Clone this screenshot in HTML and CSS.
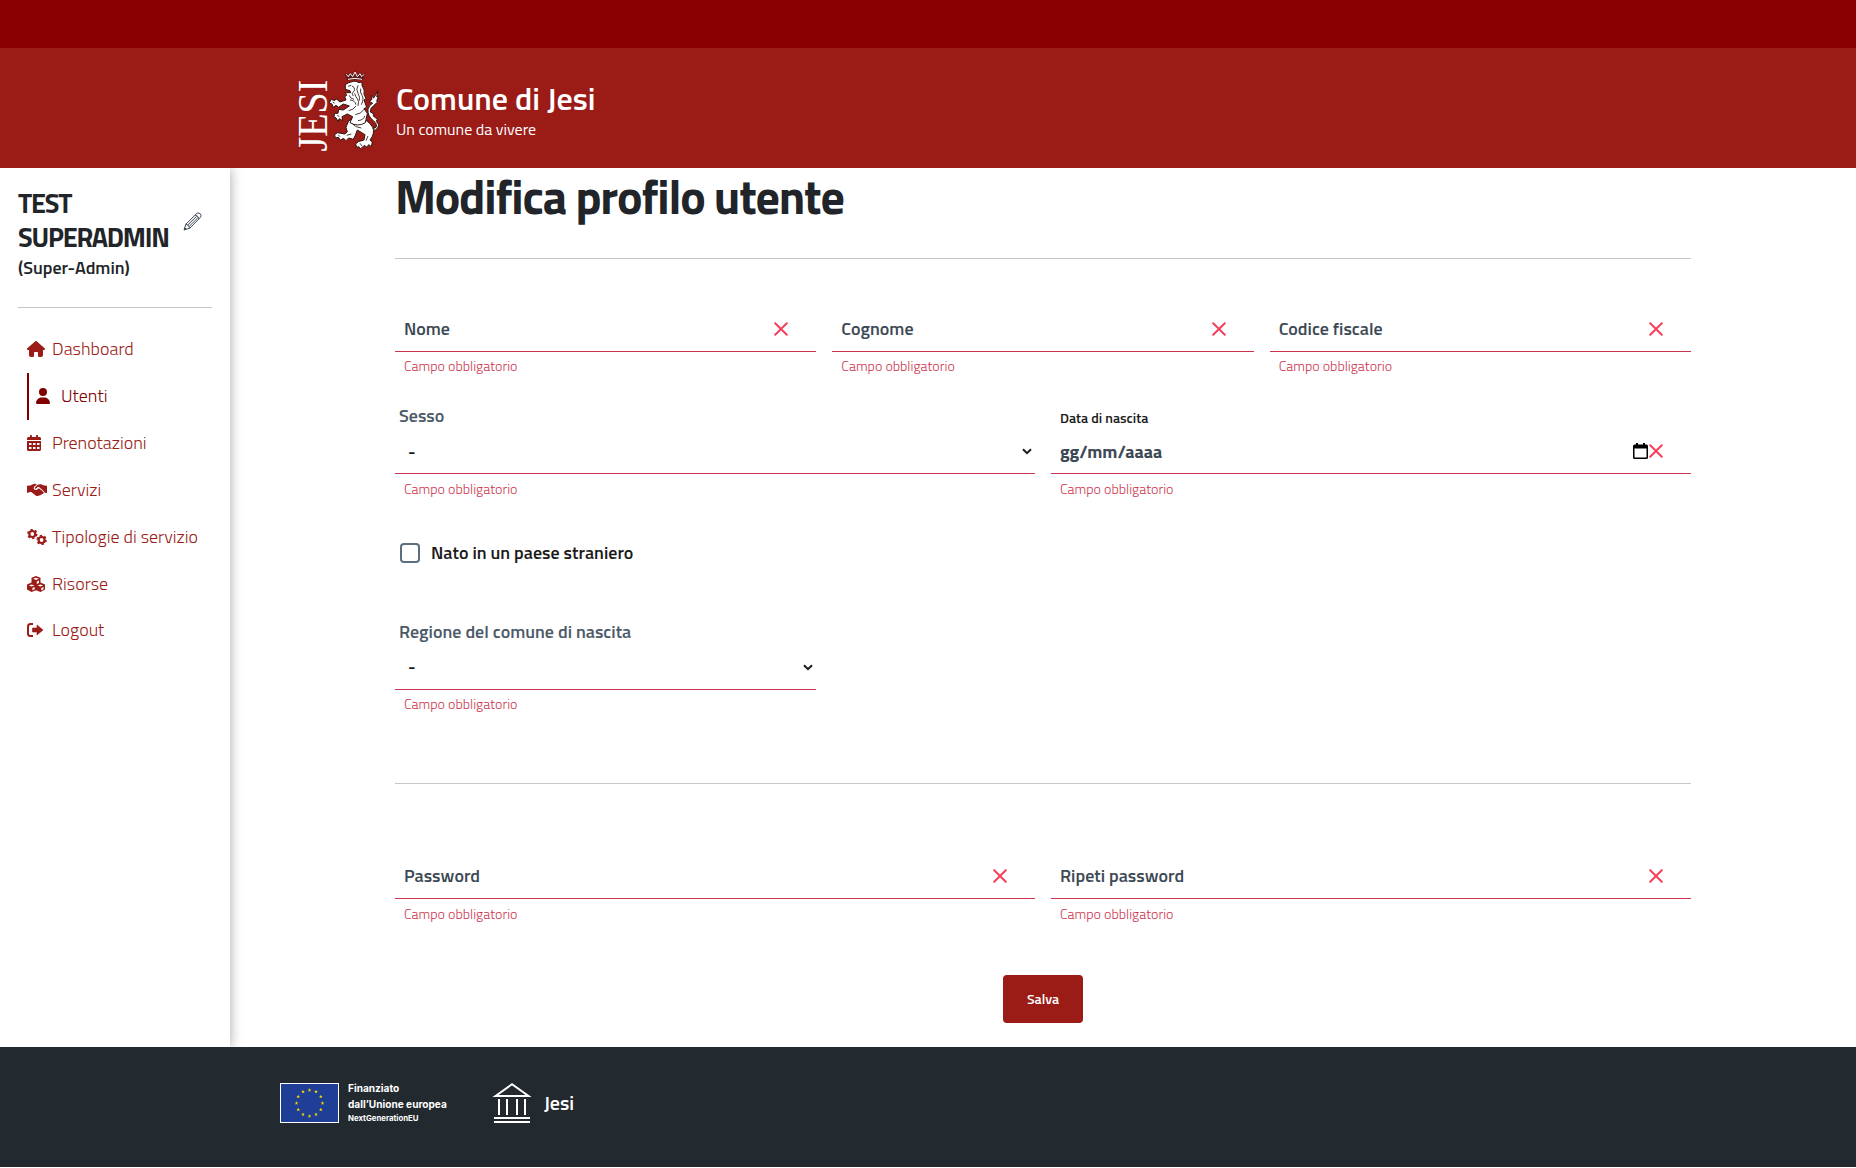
FILE: index.html
```html
<!DOCTYPE html>
<html lang="it">
<head>
<meta charset="utf-8">
<title>Modifica profilo utente</title>
<link rel="stylesheet" href="styles.css">
</head>
<body>
<svg class="defs" width="0" height="0" aria-hidden="true">
  <symbol id="cross" viewBox="0 0 14 14"><path d="M1.2 1.2 12.8 12.8M12.8 1.2 1.2 12.8" fill="none" stroke="#f73e5a" stroke-width="2" stroke-linecap="round"/></symbol>
  <symbol id="chevron" viewBox="0 0 10 7"><path d="M1 1.2 5 5.2 9 1.2" fill="none" stroke="#1a1a1a" stroke-width="2"/></symbol>
</svg>
<div class="slim"></div>
<header class="header">
  <svg class="crest" viewBox="0 0 84 82">
    <text class="crest-name" transform="translate(29.500 82.500) rotate(-90)" textLength="72" lengthAdjust="spacingAndGlyphs">JESI</text>
    <g transform="translate(-7 -5) scale(.3333)" stroke-linejoin="round">
      <path d="M173 47 167 30 175 35 180 26 187 35 195 22 202 35 211 26 215 35 223 30 217 47Q195 42 173 47Z" fill="#5b1a18" stroke="#2b1515" stroke-width="2"/>
      <path d="M174 46Q195 40 216 46M169 31l6 7 6-9 7 9 7-14 7 14 8-9 5 9 7-7" fill="none" stroke="#fff" stroke-width="3"/>
      <g fill="#fff" stroke="#2b1515" stroke-width="3">
        <path d="M222 182Q246 200 258 190 264 182 250 170 232 156 234 136 238 122 248 118L238 112 246 106 242 94 251 102 264 80 260 98 265 97 260 112 263 114 252 124Q240 132 241 144L252 150 249 155 262 166 259 172 266 182Q264 198 250 199 236 202 222 194Z"/>
        <path d="M206 160Q236 168 248 190 256 208 240 228L247 234 244 248 236 242 230 250 224 244 212 254 206 248 200 250 197 240 205 233 222 228 225 212 202 198 196 214 190 226 176 222 168 230 161 223 150 229 146 220 136 222 134 212 142 206 164 210 172 204 168 190 176 170Z"/>
        <path d="M166 62 176 56 190 52Q200 50 206 56L216 54 216 64Q226 80 222 90L228 104 222 108 230 130 222 134 232 148 226 176Q204 190 180 176L188 158 172 150 156 158 158 170 148 164 144 172 138 162 132 158 134 148 144 148 146 136 160 138 178 126 160 120 146 130 138 124 130 130 126 120 118 116 124 106 134 110 138 104 150 114 168 108 164 98 170 94 166 86 182 86 180 80 166 76Z"/>
      </g>
      <path d="M174 67l10-3M186 66q8 3 8 10t-8 12l4 8M204 64q-7 12 0 24t4 22M212 74q-3 10 4 20t-2 28M194 88q2 10 8 16t2 22M178 94q2 10 14 12M180 108q14 0 18 14M176 140q14-2 22-14M196 152q18-2 26-16M204 170q18-2 20-14M188 180q8 10 26 12M170 214l14-4M228 230l6-14M144 212l6 6M210 238l6 8M128 114l6 4M142 154l6 4" fill="none" stroke="#2b1515" stroke-width="2.500"/>
    </g>
  </svg>
  <div>
    <div class="brand">Comune di Jesi</div>
    <div class="tagline">Un comune da vivere</div>
  </div>
</header>
<div class="body">
  <aside class="side">
    <div class="user">
      <div class="user-name">TEST<br>SUPERADMIN</div>
      <svg class="pencil" viewBox="0 0 24 24" fill="none" stroke="#3b4656" stroke-width="1.250" stroke-linejoin="round"><path d="M1.500 22.500 3.500 15.500 16.500 2.700Q18 1 20 1.300 22.500 2 22.800 4.500 22.800 6 21.300 7.500L8.500 20.500Z M3.500 15.500Q7.500 16 8.500 20.500M15.300 4Q19.500 4.500 20 8.700M6 16.500 17 5.500M7.700 18.200 18.700 7.300M1.500 22.500 4 21.700 2.300 20Z"/></svg>
    </div>
    <div class="role">(Super-Admin)</div>
    <nav class="menu">
      <a class="item"><svg class="icon w18" viewBox="0 0 576 512"><path d="M575.800 255.500c0 18-15 32.100-32 32.100h-32l.7 160.200c.2 35.300-28.300 64.200-64.200 64.200H392c-22.100 0-40-17.900-40-40v-88c0-17.700-14.300-32-32-32h-64c-17.700 0-32 14.300-32 32v88c0 22.100-17.900 40-40 40h-56c-35.300 0-64-28.700-64-64V287.600H32c-18 0-32-14-32-32.100 0-9 3-17 10-24L266.400 8c7-7 15-8 22-8s15 2 21 7l255.400 224.500c8 7 12 15 11 24z"/></svg><span>Dashboard</span></a>
      <a class="item active"><svg class="icon w14" viewBox="0 0 448 512"><path d="M224 256a128 128 0 1 0 0-256 128 128 0 1 0 0 256zM178 304C80 304 0 384 0 482c0 16 13 30 30 30h388c17 0 30-14 30-30 0-98-80-178-178-178z"/></svg><span>Utenti</span></a>
      <a class="item"><svg class="icon w14" viewBox="0 0 448 512"><path fill-rule="evenodd" d="M128 0c18 0 32 14 32 32v32h128V32c0-18 14-32 32-32s32 14 32 32v32h48c27 0 48 22 48 48v48H0v-48c0-26 22-48 48-48h48V32c0-18 14-32 32-32zM0 192h448v272c0 27-21 48-48 48H48c-26 0-48-21-48-48zm64 64v64h80v-64zm128 0v64h80v-64zm128 0v64h80v-64zM64 384v64h80v-64zm128 0v64h80v-64zm128 0v64h80v-64z"/></svg><span>Prenotazioni</span></a>
      <a class="item"><svg class="icon w20" viewBox="0 0 640 512"><path d="M0 120 100 112 190 68Q260 50 320 70L228 150Q190 200 236 242 290 280 350 226L380 196 520 314Q546 340 520 372 500 390 474 376 474 416 428 414 412 440 374 428 320 456 290 436L136 320H100L0 352ZM544 112 640 120V352L560 340Q556 310 530 290L384 160 356 150 290 206Q266 220 250 202 244 186 254 174L330 96Q390 60 450 74Z"/></svg><span>Servizi</span></a>
      <a class="item"><svg class="icon w20" viewBox="0 0 20 16"><g fill="none" stroke="currentColor"><circle cx="5.300" cy="5" r="3" stroke-width="2.200"/><circle cx="5.300" cy="5" r="4.300" stroke-width="1.800" stroke-dasharray="2.200 2.303"/><circle cx="14.600" cy="11" r="3" stroke-width="2.200"/><circle cx="14.600" cy="11" r="4.300" stroke-width="1.800" stroke-dasharray="2.200 2.303"/></g></svg><span>Tipologie di servizio</span></a>
      <a class="item"><svg class="icon w18" viewBox="0 0 18 16"><path d="M9 0l4.500 1.700V6.500L18 8.500v5L13.500 16 9 14.200 4.500 16 0 13.500v-5L4.500 6.500V1.700z"/><path d="M6 2.800 9 4l3-1.200L9 1.800zM9.800 5.500V8L12 7V4.600zM1.800 9.500l2.800 1.100L7.400 9.500 4.600 8.500zM5.400 12v2.300l2.300-1V11zM10.600 9.500l2.800 1.100 2.800-1.100-2.800-1zM14.200 12v2.300l2.300-1V11z" fill="#fff"/></svg><span>Risorse</span></a>
      <a class="item"><svg class="icon w16" viewBox="0 0 16 16"><path d="M6 2H3.500Q1 2 1 4.500v7Q1 14 3.500 14H6" fill="none" stroke="currentColor" stroke-width="2"/><path d="M10 3 16 8l-6 5v-3H5.500V6H10z" stroke="currentColor" stroke-width=".6" stroke-linejoin="round"/></svg><span>Logout</span></a>
    </nav>
  </aside>
  <main class="main">
    <h1 class="title">Modifica profilo utente</h1>
    <div class="row row-names">
      <div class="field"><div class="control"><span class="label">Nome</span><svg class="cross"><use href="#cross"/></svg></div><div class="error">Campo obbligatorio</div></div>
      <div class="field"><div class="control"><span class="label">Cognome</span><svg class="cross"><use href="#cross"/></svg></div><div class="error">Campo obbligatorio</div></div>
      <div class="field"><div class="control"><span class="label">Codice fiscale</span><svg class="cross"><use href="#cross"/></svg></div><div class="error">Campo obbligatorio</div></div>
    </div>
    <div class="row row-birth">
      <div class="field"><div class="caption">Sesso</div><div class="control select"><span class="value">-</span><svg class="chevron"><use href="#chevron"/></svg></div><div class="error">Campo obbligatorio</div></div>
      <div class="field"><div class="caption small">Data di nascita</div><div class="control"><span class="label date">gg/mm/aaaa</span><svg class="calendar" viewBox="0 0 15 16"><path fill-rule="evenodd" d="M3 0h2v1.500h5V0h2v1.500h1.500Q15 1.500 15 3v11.500Q15 16 13.500 16h-12Q0 16 0 14.500V3Q0 1.500 1.500 1.500H3zM1.500 5.500v9h12v-9z"/></svg><svg class="cross"><use href="#cross"/></svg></div><div class="error">Campo obbligatorio</div></div>
    </div>
    <label class="check"><span class="box"></span><span>Nato in un paese straniero</span></label>
    <div class="row row-region">
      <div class="field"><div class="caption">Regione del comune di nascita</div><div class="control select"><span>-</span><svg class="chevron"><use href="#chevron"/></svg></div><div class="error">Campo obbligatorio</div></div>
    </div>
    <div class="row row-pass">
      <div class="field"><div class="control"><span class="label">Password</span><svg class="cross"><use href="#cross"/></svg></div><div class="error">Campo obbligatorio</div></div>
      <div class="field"><div class="control"><span class="label">Ripeti password</span><svg class="cross"><use href="#cross"/></svg></div><div class="error">Campo obbligatorio</div></div>
    </div>
    <button class="save">Salva</button>
  </main>
</div>
<footer class="footer">
  <svg class="flag" viewBox="0 0 59 40"><rect x=".5" y=".5" width="58" height="39" fill="#1e3f95" stroke="#fff"/>
    <symbol id="s" viewBox="-2 -2 4 4"><path fill="#f5d000" d="M0-2 .5-.6H1.900L.8.300 1.200 1.700 0 .9-1.200 1.700-.8.300-1.900-.6H-.5z"/></symbol>
    <g><use href="#s" x="27.500" y="5" width="4" height="4"/><use href="#s" x="34" y="6.700" width="4" height="4"/><use href="#s" x="38.800" y="11.500" width="4" height="4"/><use href="#s" x="40.500" y="18" width="4" height="4"/><use href="#s" x="38.800" y="24.500" width="4" height="4"/><use href="#s" x="34" y="29.300" width="4" height="4"/><use href="#s" x="27.500" y="31" width="4" height="4"/><use href="#s" x="21" y="29.300" width="4" height="4"/><use href="#s" x="16.200" y="24.500" width="4" height="4"/><use href="#s" x="14.500" y="18" width="4" height="4"/><use href="#s" x="16.200" y="11.500" width="4" height="4"/><use href="#s" x="21" y="6.700" width="4" height="4"/></g>
  </svg>
  <div class="fund"><div class="f1">Finanziato</div><div class="f2">dall’Unione europea</div><div class="f3">NextGenerationEU</div></div>
  <svg class="temple" viewBox="0 0 40 40" fill="none" stroke="#fff" stroke-width="2"><path d="M3.500 13 20 1.300 36.500 13zM7 16v16M15 16v16M25 16v16M33 16v16M2 35h36M2 39h36"/></svg>
  <div class="town">Jesi</div>
</footer>
</body>
</html>
```
FILE: styles.css
```css
* { box-sizing: border-box; }
body { margin: 0; background: #fff; color: #212529; font-family: "Titillium Web", "Open Sans", sans-serif; font-size: 18px; line-height: 24px; }
.defs { position: absolute; }
span, .brand, .tagline, .error, .caption { white-space: nowrap; }

.slim { height: 48px; background: #8a0000; }
.header { height: 120px; background: #9b1b17; color: #fff; display: flex; align-items: center; padding: 4px 0 0 297px; gap: 15px; }
.crest { width: 84px; height: 82px; overflow: visible; }
.crest-name { font-family: "Liberation Serif", serif; font-size: 43px; fill: #fff; }
.brand { font-size: 32px; line-height: 37px; font-weight: 600; }
.tagline { font-size: 16px; line-height: 24px; }

.body { display: flex; height: 879px; }
.side { width: 230px; padding: 18px 18px 0; box-shadow: 0 0 12px rgba(0, 0, 0, .35); clip-path: inset(0 -20px 0 0); }
.user { display: flex; align-items: center; justify-content: space-between; padding-right: 10px; }
.user-name { font-size: 27px; line-height: 34px; font-weight: 700; letter-spacing: -1.2px; }
.pencil { width: 19px; height: 19px; margin-top: 2px; }
.role { font-weight: 600; height: 54px; border-bottom: 1px solid #c5c7c9; line-height: 28px; }
.menu { padding: 18px 9px; }
.item { display: flex; align-items: center; height: 46.85px; color: #9b1b17; font-weight: 300; }
.item.active { color: #800000; border-left: 2px solid #800000; padding-left: 7px; }
.icon { height: 16px; fill: currentColor; flex: none; }
.w14 { width: 14px; margin-right: 11px; }
.w16 { width: 16px; margin-right: 9px; }
.w18 { width: 18px; margin-right: 7px; }
.w20 { width: 20px; margin-right: 5px; }

.main { width: 1296px; margin-left: 165px; }
.title { height: 91px; margin: 0; border-bottom: 1px solid #c5c7c9; font-size: 48px; line-height: 58px; font-weight: 700; letter-spacing: -1.2px; }
.row { display: grid; gap: 16px; }
.row-names { grid-template-columns: repeat(3, 1fr); padding-top: 52px; }
.row-birth { grid-template-columns: repeat(2, 1fr); padding-top: 22px; }
.row-region { grid-template-columns: 421px; height: 163px; margin-top: 55px; }
.row-pass { grid-template-columns: repeat(2, 1fr); border-top: 1px solid #c5c7c9; padding-top: 74px; }
.control { height: 41px; border-bottom: 1px solid #cc334d; display: flex; align-items: center; padding: 0 28px 4px 9px; }
.label { color: #3d4955; font-weight: 600; margin-right: auto; }
.label.date { font-weight: 700; padding-top: 2px; }
.cross { width: 14px; height: 14px; }
.error { height: 30px; padding-left: 9px; color: #cc334d; font-size: 14px; font-weight: 300; line-height: 28px; }
.row-birth .error, .row-pass .error { line-height: 30px; }
.caption { height: 29px; padding-left: 4px; color: #4c5a68; font-weight: 600; line-height: 24px; }
.caption.small { color: #1a1a1a; padding: 2px 0 0 9px; font-size: 14px; }
.select { padding: 0 3px 4px 13px; justify-content: space-between; font-weight: 600; color: #1a1a1a; }
.value { padding-top: 2px; }
.chevron { width: 10px; height: 7px; }
.calendar { width: 15px; height: 16px; margin-right: 1px; }
.check { display: flex; align-items: center; height: 24px; margin-top: 37px; padding-left: 5px; gap: 11px; font-weight: 600; color: #1a1a1a; }
.box { width: 20px; height: 20px; border: 2px solid #5b6f82; border-radius: 4px; }
.save { display: block; width: 80px; height: 48px; margin: 46px auto 0; border: 0; border-radius: 4px; background: #9b1b17; color: #fff; font: 600 14px/24px "Titillium Web", "Open Sans", sans-serif; padding: 0; }

.footer { height: 120px; background: #22292f; color: #fff; display: flex; padding: 36px 0 0 280px; }
.flag { width: 59px; height: 40px; }
.fund { width: 144px; margin-left: 9px; font-family: Inter, sans-serif; font-weight: 700; white-space: nowrap; }
.f1, .f2 { font-size: 10.100px; line-height: 16px; margin-top: -3px; }
.f2 { margin-top: 0; }
.f3 { font-size: 7.800px; line-height: 13px; }
.temple { width: 40px; height: 40px; }
.town { margin-left: 12px; line-height: 40px; font-weight: 600; font-size: 20px; }
```
